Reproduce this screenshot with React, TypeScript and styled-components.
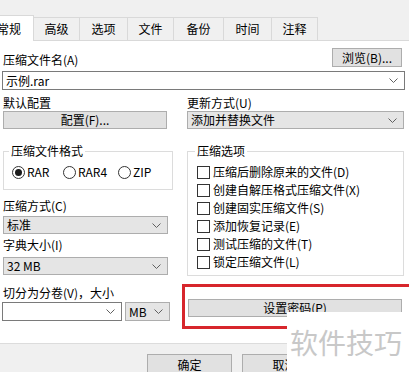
import styled, { createGlobalStyle } from "styled-components";

const GlobalStyle = createGlobalStyle`
  html, body {
    margin: 0;
    padding: 0;
    background: #ffffff;
    overflow: hidden;
  }
  body {
    font-family: "Noto Sans CJK SC", "Noto Sans", sans-serif;
    font-size: 12px;
    color: #000;
  }
`;

const Dialog = styled.div`
  position: relative;
  width: 409px;
  height: 372px;
  overflow: hidden;
  display: flex;
  flex-direction: column;
  background: #f0f0f0;
`;

const TabStrip = styled.div`
  height: 41px;
  flex-shrink: 0;
  box-sizing: border-box;
  display: flex;
  align-items: flex-end;
  margin-left: -16px;
  border-bottom: 1px solid #d9d9d9;
`;

const Tab = styled.div<{ $w: number; $active?: boolean }>`
  width: ${(p) => p.$w}px;
  height: ${(p) => (p.$active ? 26 : 23)}px;
  margin-bottom: ${(p) => (p.$active ? -1 : 0)}px;
  box-sizing: border-box;
  display: flex;
  align-items: center;
  justify-content: center;
  line-height: 14px;
  background: ${(p) => (p.$active ? "#ffffff" : "#f0f0f0")};
  border: 1px solid #d9d9d9;
  border-bottom: none;
  border-left: ${(p) => (p.$active ? "1px solid #d9d9d9" : "none")};
`;

const Panel = styled.div`
  height: 303px;
  flex-shrink: 0;
  box-sizing: border-box;
  background: #ffffff;
  border-bottom: 1px solid #dcdcdc;
  padding: 7px 4px 0 2px;
  display: flex;
  flex-direction: column;
`;

const TopRow = styled.div`
  display: flex;
  justify-content: space-between;
  align-items: flex-end;
  padding-left: 1px;
`;

const Label = styled.div<{ $mt?: number }>`
  height: 14px;
  line-height: 14px;
  margin-top: ${(p) => p.$mt ?? 0}px;
  white-space: nowrap;
`;

const Button = styled.div<{ $w: number; $h?: number }>`
  width: ${(p) => p.$w}px;
  height: ${(p) => p.$h ?? 19}px;
  box-sizing: border-box;
  display: flex;
  align-items: center;
  justify-content: center;
  background: #e1e1e1;
  border: 1px solid #adadad;
  line-height: 14px;
  white-space: nowrap;
`;

const Combo = styled.div<{ $w?: number; $gray?: boolean; $h?: number; $mt?: number }>`
  width: ${(p) => (p.$w ? `${p.$w}px` : "auto")};
  height: ${(p) => p.$h ?? 18}px;
  margin-top: ${(p) => p.$mt ?? 0}px;
  box-sizing: border-box;
  display: flex;
  align-items: center;
  justify-content: space-between;
  padding: 0 6px 0 3px;
  background: ${(p) => (p.$gray ? "#e5e5e5" : "#ffffff")};
  border: 1px solid ${(p) => (p.$gray ? "#adadad" : "#7a7a7a")};
  line-height: 14px;
  white-space: nowrap;
`;

const Columns = styled.div`
  display: grid;
  grid-template-columns: 168px 217px;
  column-gap: 16px;
  margin-top: 6px;
  padding-left: 1px;
`;

const Column = styled.div`
  display: flex;
  flex-direction: column;
  align-items: flex-start;
`;

const Group = styled.fieldset<{ $mt: number; $w: number }>`
  margin: ${(p) => p.$mt}px 0 0 0;
  width: ${(p) => p.$w}px;
  box-sizing: border-box;
  border: 1px solid #dcdcdc;
  padding: 0;
`;

const Legend = styled.legend<{ $ml: number }>`
  margin-left: ${(p) => p.$ml}px;
  padding: 0 2px;
  line-height: 14px;
  height: 14px;
`;

const RadioRow = styled.div`
  display: flex;
  padding: 7px 0 10px 8px;
`;

const RadioItem = styled.div<{ $w?: number }>`
  width: ${(p) => (p.$w ? `${p.$w}px` : "auto")};
  display: flex;
  align-items: center;
  gap: 2px;
  line-height: 14px;
`;

const RadioDot = styled.span<{ $on?: boolean }>`
  width: 13px;
  height: 13px;
  box-sizing: border-box;
  border-radius: 50%;
  border: 1px solid #333333;
  background: #ffffff;
  display: flex;
  align-items: center;
  justify-content: center;
  &::after {
    content: "";
    width: 7px;
    height: 7px;
    border-radius: 50%;
    background: ${(p) => (p.$on ? "#1a1a1a" : "transparent")};
  }
`;

const CheckList = styled.div`
  display: flex;
  flex-direction: column;
  padding: 5px 0 4px 9px;
`;

const CheckRow = styled.div`
  height: 18px;
  display: flex;
  align-items: center;
  gap: 3px;
  line-height: 14px;
  white-space: nowrap;
`;

const CheckBox = styled.span`
  width: 13px;
  height: 13px;
  box-sizing: border-box;
  border: 1px solid #333333;
  background: #ffffff;
`;

const SplitRow = styled.div`
  display: flex;
  gap: 3px;
  margin-top: 2px;
  margin-left: -1px;
`;

const Highlight = styled.div`
  align-self: stretch;
  margin: 8px -30px 0 -5px;
  border: 3px solid #d7262c;
  padding: 12px 0 9px 3px;
`;

const BottomBar = styled.div`
  flex: 1;
  display: flex;
  gap: 10px;
  padding: 10px 0 0 147px;
`;

const Watermark = styled.div`
  position: absolute;
  left: 287px;
  top: 312px;
  right: 0;
  bottom: 0;
  background: #ffffff;
  color: #c8c8c8;
  font-size: 28px;
  line-height: 28px;
  padding: 16px 0 0 3px;
  white-space: nowrap;
`;

function Chevron() {
  return (
    <svg width="9" height="5" viewBox="0 0 9 5">
      <polyline points="0.5,0.5 4.5,4.5 8.5,0.5" fill="none" stroke="#606060" strokeWidth="1" />
    </svg>
  );
}

const tabs: [string, number][] = [
  ["常规", 50],
  ["高级", 46],
  ["选项", 48],
  ["文件", 46],
  ["备份", 50],
  ["时间", 48],
  ["注释", 46],
];

const options = [
  "压缩后删除原来的文件(D)",
  "创建自解压格式压缩文件(X)",
  "创建固实压缩文件(S)",
  "添加恢复记录(E)",
  "测试压缩的文件(T)",
  "锁定压缩文件(L)",
];

export default function App() {
  return (
    <>
      <GlobalStyle />
      <Dialog>
        <TabStrip>
          {tabs.map(([name, w], i) => (
            <Tab key={name} $w={w} $active={i === 0}>
              {name}
            </Tab>
          ))}
        </TabStrip>

        <Panel>
          <TopRow>
            <Label>压缩文件名(A)</Label>
            <Button $w={70} style={{ marginRight: 3 }}>浏览(B)...</Button>
          </TopRow>
          <Combo $h={19} $mt={4}>
            <span>示例.rar</span>
            <Chevron />
          </Combo>

          <Columns>
            <Column>
              <Label>默认配置</Label>
              <Button $w={164} $h={18} style={{ marginTop: 1 }}>配置(F)...</Button>

              <Group $mt={15} $w={170}>
                <Legend $ml={5}>压缩文件格式</Legend>
                <RadioRow>
                  <RadioItem $w={51}>
                    <RadioDot $on />
                    RAR
                  </RadioItem>
                  <RadioItem $w={55}>
                    <RadioDot />
                    RAR4
                  </RadioItem>
                  <RadioItem>
                    <RadioDot />
                    ZIP
                  </RadioItem>
                </RadioRow>
              </Group>

              <Label $mt={9}>压缩方式(C)</Label>
              <Combo $w={165} $gray $mt={3}>
                <span>标准</span>
                <Chevron />
              </Combo>

              <Label $mt={4}>字典大小(I)</Label>
              <Combo $w={165} $gray $mt={5}>
                <span>32 MB</span>
                <Chevron />
              </Combo>

              <Label $mt={11}>切分为分卷(V)，大小</Label>
              <SplitRow>
                <Combo $w={120} $h={19}>
                  <span />
                  <Chevron />
                </Combo>
                <Combo $w={45} $h={19} $gray>
                  <span>MB</span>
                  <Chevron />
                </Combo>
              </SplitRow>
            </Column>

            <Column>
              <Label>更新方式(U)</Label>
              <Combo $w={217} $gray $mt={1}>
                <span>添加并替换文件</span>
                <Chevron />
              </Combo>

              <Group $mt={15} $w={217}>
                <Legend $ml={7}>压缩选项</Legend>
                <CheckList>
                  {options.map((o) => (
                    <CheckRow key={o}>
                      <CheckBox />
                      {o}
                    </CheckRow>
                  ))}
                </CheckList>
              </Group>

              <Highlight>
                <Button $w={214} $h={18}>设置密码(P)</Button>
              </Highlight>
            </Column>
          </Columns>
        </Panel>

        <BottomBar>
          <Button $w={85} $h={22}>确定</Button>
          <Button $w={85} $h={22}>取消</Button>
        </BottomBar>

        <Watermark>软件技巧</Watermark>
      </Dialog>
    </>
  );
}
